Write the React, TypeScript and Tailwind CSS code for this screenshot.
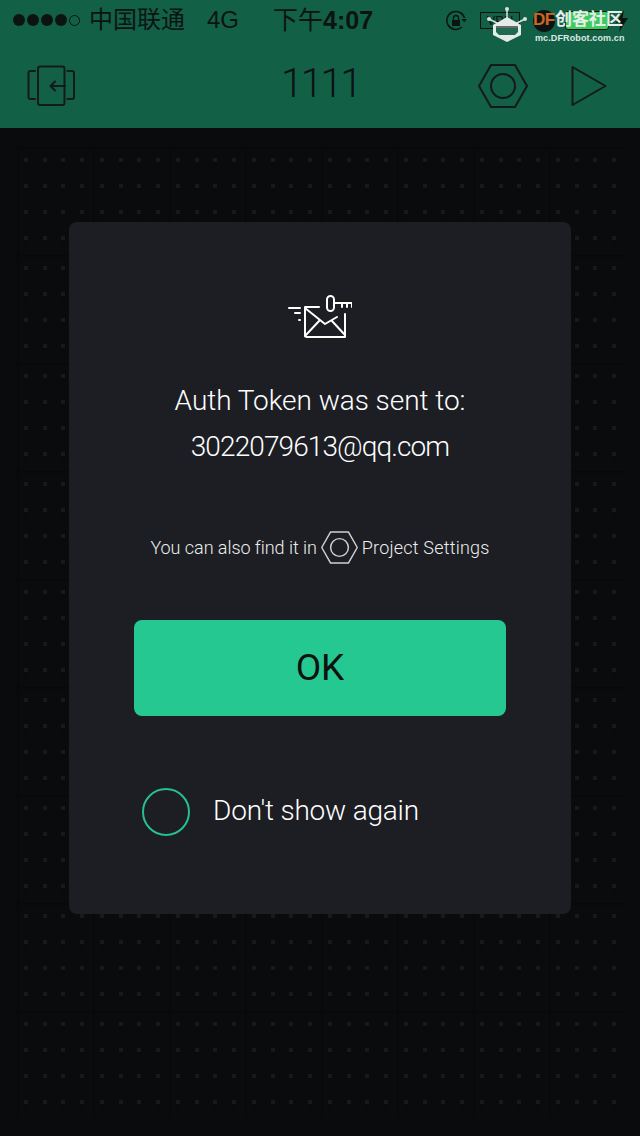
import React from 'react';

const dotX = [0, 19, 37, 56];
const dotY = [0, 26, 52, 78];

function HexIcon({ className }: { className?: string }) {
  return (
    <svg viewBox="0 0 50 44" fill="none" stroke="currentColor" strokeWidth="2" strokeLinejoin="round" className={className}>
      <path d="M1 22 13 1h24l12 21-12 21H13Z" />
      <circle cx="25" cy="22" r="12" />
    </svg>
  );
}

function DotGrid() {
  return (
    <svg className="absolute inset-0 h-full w-full" aria-hidden="true">
      <defs>
        <pattern id="widget-grid" x="17" y="19" width="76" height="108" patternUnits="userSpaceOnUse">
          <rect x="0" y="0" width="1.5" height="108" fill="#070809" />
          <rect x="0" y="0" width="76" height="1.5" fill="#070809" />
          {dotX.map((x) =>
            dotY.map((y) => (
              <g key={`${x}-${y}`}>
                <rect x={x + 7} y={y + 11} width="4" height="10" fill="#090a0b" />
                <rect x={x + 7} y={y + 11} width="4" height="4" fill="#18191b" />
              </g>
            ))
          )}
        </pattern>
      </defs>
      <rect x="17" y="19" width="608" height="970" fill="url(#widget-grid)" />
    </svg>
  );
}

function Watermark() {
  return (
    <div className="absolute left-[486px] top-[6px] h-[40px] w-[154px]">
      <svg viewBox="0 0 42 38" className="absolute left-0 top-0 h-[38px] w-[42px]">
        <g stroke="#d9e2de" strokeWidth="1.5">
          <path d="M21 2v12M3 13l10 5M39 13l-10 5" />
        </g>
        <circle cx="21" cy="3" r="2" fill="#d9e2de" />
        <circle cx="3" cy="13" r="2" fill="#d9e2de" />
        <circle cx="39" cy="13" r="2" fill="#d9e2de" />
        <path d="M21 11 35 19v10l-14 7-14-7V19Z" fill="#e4ebe8" />
        <path d="M10 21h22v5l-3 3H13l-3-3Z" fill="#1f6b52" />
        <rect x="10" y="20" width="22" height="2" fill="#6b6b66" />
      </svg>
      <div className="absolute left-[47px] top-[5px] flex h-[18px] items-center whitespace-nowrap leading-[18px] font-bold font-['Liberation_Sans','Noto_Sans_CJK_SC',sans-serif]">
        <span className="w-[22px] text-[17px] tracking-[-0.600px] text-[#cf651f]">DF</span>
        <span className="text-[17px] text-[#e6eeea]">创客社区</span>
      </div>
      <div className="absolute left-[49px] top-[26px] whitespace-nowrap text-[9px] leading-[12px] font-bold tracking-[0.120px] text-[#dfe8e4] font-['Liberation_Sans',sans-serif]">
        mc.DFRobot.com.cn
      </div>
    </div>
  );
}

function StatusBar() {
  return (
    <div className="relative flex h-[40px] items-center pl-[13px] text-[#0c1413] font-['Liberation_Sans','Noto_Sans_CJK_SC',sans-serif]">
      <div className="flex items-center gap-[2px]">
        <span className="h-[12px] w-[12px] rounded-full bg-[#0c1413]" />
        <span className="h-[12px] w-[12px] rounded-full bg-[#0c1413]" />
        <span className="h-[12px] w-[12px] rounded-full bg-[#0c1413]" />
        <span className="h-[12px] w-[12px] rounded-full bg-[#0c1413]" />
        <span className="h-[11px] w-[11px] rounded-full border border-[#0c1413]" />
      </div>
      <span className="ml-[9px] w-[118px] text-[24px] leading-none">中国联通</span>
      <span className="w-[66px] text-[24px] leading-none">4G</span>
      <span className="text-[25px] leading-none">下午<span className="font-bold">4:07</span></span>
      <svg viewBox="0 0 22 22" fill="none" className="absolute left-[445px] top-[10px] h-[22px] w-[22px]">
        <path d="M17 17A9 9 0 1 1 19.500 8" stroke="#0c1413" strokeWidth="1.500" />
        <path d="m16.500 9 5.500 0-2.800 3.200Z" fill="#0c1413" />
        <rect x="7" y="10" width="8" height="6" fill="#0c1413" />
        <path d="M8.500 10V8a2.500 2.500 0 0 1 5 0v2" stroke="#0c1413" strokeWidth="1.300" />
      </svg>
      <div className="absolute left-[480px] top-[12px] flex h-[17px] w-[40px] items-center justify-center border border-[#0c1413] text-[13px] leading-none">
        VPN
      </div>
      <span className="absolute left-[533px] top-[10px] h-[22px] w-[22px] rounded-full bg-[#0c1413]" />
      <div className="absolute left-[565px] top-[11px] h-[19px] w-[44px] rounded-[3px] border border-[#0c1413] bg-[#3ecb5e]" />
      <svg viewBox="0 0 12 22" className="absolute left-[616px] top-[10px] h-[22px] w-[12px]">
        <path d="M8 0 0 13h5l-2 9 9-14H6.500Z" fill="#0c1413" />
      </svg>
      <Watermark />
    </div>
  );
}

function NavBar() {
  return (
    <div className="flex h-[88px] items-center justify-between pl-[27px] pr-[33px] pt-[4px] text-[#141a1c]">
      <svg viewBox="0 0 48 42" fill="none" stroke="currentColor" strokeWidth="2" strokeLinecap="round" strokeLinejoin="round" className="h-[42px] w-[48px]">
        <rect x="11" y="1.500" width="26.500" height="38.500" rx="2" />
        <path d="M8 6H3.500a2 2 0 0 0-2 2v24a2 2 0 0 0 2 2H8" />
        <path d="M40.500 6H45a2 2 0 0 1 2 2v24a2 2 0 0 1-2 2h-4.500" />
        <path d="M38 21H23.500M28 16.500 23.500 21l4.500 4.500" />
      </svg>
      <span className="mb-[4px] ml-[88px] text-[40px] font-light leading-none tracking-[-2.400px] text-[#0c1214] font-['Roboto',sans-serif]">1111</span>
      <div className="flex items-center gap-[43px]">
        <HexIcon className="h-[44px] w-[50px]" />
        <svg viewBox="0 0 36 42" fill="none" stroke="currentColor" strokeWidth="2" strokeLinejoin="round" className="h-[42px] w-[36px]">
          <path d="M1.500 2 34.500 21 1.500 40Z" />
        </svg>
      </div>
    </div>
  );
}

function TokenIcon() {
  return (
    <svg viewBox="0 0 64 44" fill="none" stroke="#ffffff" strokeWidth="2" strokeLinecap="round" strokeLinejoin="round" className="h-[44px] w-[64px]">
      <path d="M1 13h11M7 18h5M11 25h1" />
      <path d="M31 12H17v28a2 2 0 0 0 2 2h38V19" />
      <path d="m17 13 20 16 12-7M17 41l15-16M44 26l13 14" />
      <rect x="39" y="1" width="7" height="15" rx="3.500" />
      <path d="M46 8h18M54 8v4M59 8v4M64 8v4" />
    </svg>
  );
}

export default function App() {
  return (
    <div className="flex min-h-[1136px] w-[640px] flex-col overflow-hidden bg-[#0a0b0d]">
      <header className="h-[128px] shrink-0 bg-[#126046]">
        <StatusBar />
        <NavBar />
      </header>

      <main className="relative flex flex-1 justify-center pt-[94px]">
        <DotGrid />
        <div className="relative flex h-[692px] w-[502px] flex-col items-center rounded-[8px] bg-[#1c1e23] pt-[73px] text-white font-['Roboto',sans-serif] font-light">
          <TokenIcon />
          <p className="mt-[39px] text-[28px] leading-[46px] tracking-[-0.050px]">Auth Token was sent to:</p>
          <p className="text-[28px] leading-[46px] tracking-[-0.900px]">3022079613@qq.com</p>

          <div className="mt-[60px] flex h-[34px] items-center text-[18px] text-[#eeeeee]">
            <span className="tracking-[-0.050px]">You can also find it in</span>
            <HexIcon className="mx-[4px] h-[33px] w-[37px] text-[#cfcfcf]" />
            <span className="tracking-[0.200px]">Project Settings</span>
          </div>

          <button className="mt-[56px] flex h-[96px] w-[372px] items-center justify-center rounded-[8px] bg-[#25c890] text-[37px] font-normal text-[#0c1210]">
            OK
          </button>

          <div className="mt-[72px] flex w-[372px] items-center pl-[8px]">
            <span className="h-[48px] w-[48px] rounded-full border-2 border-[#25c08c]" />
            <span className="ml-[23px] pb-[2px] text-[28px] leading-none tracking-[-0.200px]">Don't show again</span>
          </div>
        </div>
      </main>
    </div>
  );
}
